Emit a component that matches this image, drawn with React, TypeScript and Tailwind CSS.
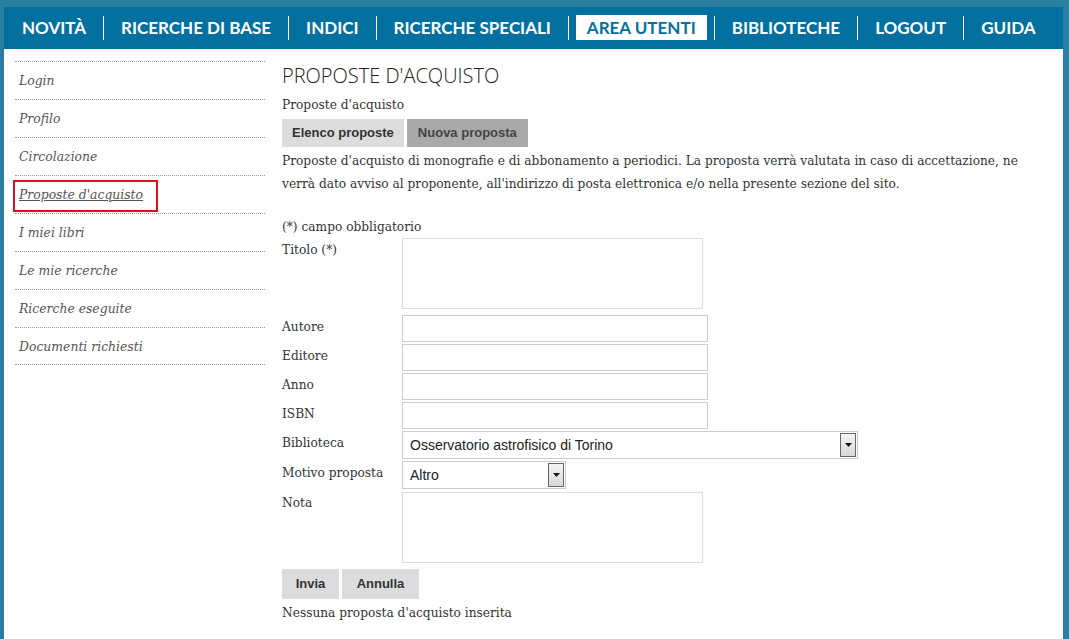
const NAV = [
  { label: "NOVITÀ" },
  { label: "RICERCHE DI BASE" },
  { label: "INDICI" },
  { label: "RICERCHE SPECIALI" },
  { label: "AREA UTENTI", active: true },
  { label: "BIBLIOTECHE" },
  { label: "LOGOUT" },
  { label: "GUIDA" },
];

const SIDE = [
  "Login",
  "Profilo",
  "Circolazione",
  "Proposte d'acquisto",
  "I miei libri",
  "Le mie ricerche",
  "Ricerche eseguite",
  "Documenti richiesti",
];

const serif = "font-['DejaVu_Serif',Georgia,serif]";

function SelectBox({ width, value }: { width: string; value: string }) {
  return (
    <div
      className={`${width} h-[28px] border border-[#ccc] bg-white flex items-center justify-between pl-[7px] pr-[1px] font-['Liberation_Sans',Arial,sans-serif] text-[14px] text-[#222]`}
    >
      <span>{value}</span>
      <span className="w-[16px] h-[24px] border border-[#666] bg-gradient-to-b from-[#f4f4f4] to-[#d8d8d8] flex items-center justify-center">
        <svg width="7" height="4" viewBox="0 0 7 4">
          <path d="M0 0h7L3.5 4z" fill="#111" />
        </svg>
      </span>
    </div>
  );
}

function Row({ label, children }: { label: string; children: React.ReactNode }) {
  return (
    <div className="flex items-start">
      <div className="w-[120px] leading-[20px] pt-[2px] shrink-0">{label}</div>
      {children}
    </div>
  );
}

export default function App() {
  return (
    <div className="min-h-[639px] bg-[#2a7fa0] pt-[7px] pl-[4px] pr-[6px]">
      <nav className="h-[42px] bg-[#0470a0] flex items-center pl-[1px] font-['Lato',sans-serif] font-bold text-[17px] text-white whitespace-nowrap">
        {NAV.map((item, i) => (
          <div key={item.label} className="flex items-center shrink-0">
            {i > 0 && <span className="w-px h-[24px] bg-white" />}
            <span className="px-[17px] leading-[24px]">
              {item.active ? (
                <span className="bg-white text-[#0470a0] -mx-[10px] px-[11px] py-[2px]">
                  {item.label}
                </span>
              ) : (
                item.label
              )}
            </span>
          </div>
        ))}
      </nav>

      <div className="bg-white min-h-[590px] flex pl-[11px] pt-[12px]">
        <aside className="w-[250px] shrink-0">
          <ul className={`${serif} italic text-[12.4px] text-[#555]`}>
            {SIDE.map((s, i) => (
              <li
                key={s}
                className={`h-[38px] border-t border-dotted border-[#999] flex items-center pl-[4px] pt-[2px] ${
                  i === SIDE.length - 1 ? "border-b" : ""
                }`}
              >
                {s === "Proposte d'acquisto" ? (
                  <span className="-ml-[6px] pl-[4px] pr-[13px] h-[32px] flex items-center border-2 border-[#e0101a] underline">
                    {s}
                  </span>
                ) : (
                  s
                )}
              </li>
            ))}
          </ul>
        </aside>

        <main className={`ml-[17px] flex-1 ${serif} text-[12.2px] text-[#333]`}>
          <h1 className="font-['Open_Sans',sans-serif] font-light text-[20px] leading-[26px] text-[#222] mt-[2px]">
            PROPOSTE D'ACQUISTO
          </h1>
          <p className="leading-[20px] mt-[6px]">Proposte d'acquisto</p>
          <div className="flex gap-[3px] mt-[4px] font-['Liberation_Sans',Arial,sans-serif] font-bold text-[13px]">
            <span className="h-[28px] px-[10px] flex items-center bg-[#dcdcdc] text-[#333]">Elenco proposte</span>
            <span className="h-[28px] px-[11px] flex items-center bg-[#a9a9a9] text-[#444]">Nuova proposta</span>
          </div>
          <p className="leading-[23px] mt-[3px] max-w-[760px]">
            Proposte d'acquisto di monografie e di abbonamento a periodici. La proposta verrà valutata in caso di accettazione, ne verrà dato avviso al proponente, all'indirizzo di posta elettronica e/o nella presente sezione del sito.
          </p>
          <p className="leading-[20px] mt-[21px]">(*) campo obbligatorio</p>

          <div className="flex flex-col gap-[2px] mt-[1px]">
            <Row label="Titolo (*)">
              <textarea className="w-[301px] h-[71px] border border-[#ddd] mb-[4px] resize-none" />
            </Row>
            <Row label="Autore">
              <input className="w-[306px] h-[27px] border border-[#ccc]" />
            </Row>
            <Row label="Editore">
              <input className="w-[306px] h-[27px] border border-[#ccc]" />
            </Row>
            <Row label="Anno">
              <input className="w-[306px] h-[27px] border border-[#ccc]" />
            </Row>
            <Row label="ISBN">
              <input className="w-[306px] h-[27px] border border-[#ccc]" />
            </Row>
            <Row label="Biblioteca">
              <SelectBox width="w-[456px]" value="Osservatorio astrofisico di Torino" />
            </Row>
            <Row label="Motivo proposta">
              <SelectBox width="w-[164px]" value="Altro" />
            </Row>
            <Row label="Nota">
              <textarea className="w-[301px] h-[71px] border border-[#ddd] mt-[1px] resize-none" />
            </Row>
          </div>

          <div className="flex gap-[3px] mt-[6px] font-['Liberation_Sans',Arial,sans-serif] font-bold text-[13px] text-[#333]">
            <span className="w-[57px] h-[30px] flex items-center justify-center bg-[#dcdcdc]">Invia</span>
            <span className="w-[77px] h-[30px] flex items-center justify-center bg-[#dcdcdc]">Annulla</span>
          </div>
          <p className="leading-[20px] mt-[4px]">Nessuna proposta d'acquisto inserita</p>
        </main>
      </div>
    </div>
  );
}
